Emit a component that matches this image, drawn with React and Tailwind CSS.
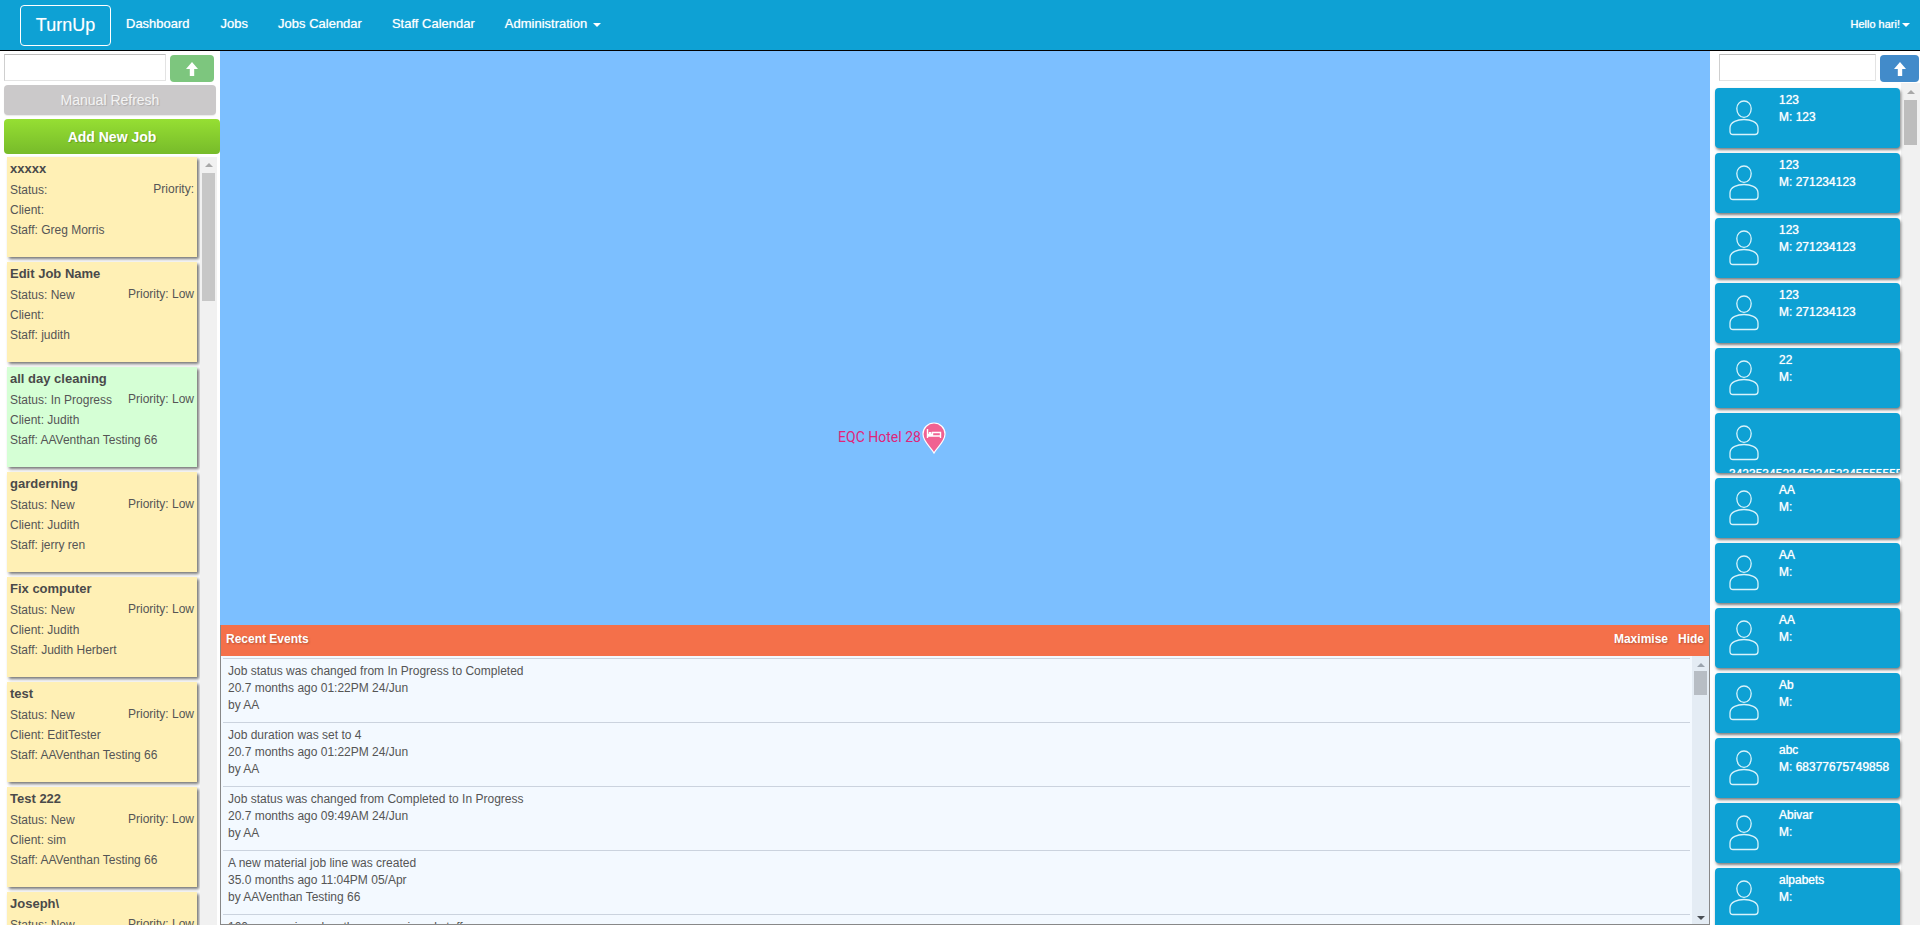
import React from "react";

const yellow = "bg-[#fff0b5]";
const green = "bg-[#d5ffd5]";
const jobs = [
  { t: "xxxxx", s: "", p: "Priority:", c: "", f: "Greg Morris", bg: yellow },
  { t: "Edit Job Name", s: "New", p: "Priority: Low", c: "", f: "judith", bg: yellow },
  { t: "all day cleaning", s: "In Progress", p: "Priority: Low", c: "Judith", f: "AAVenthan Testing 66", bg: green },
  { t: "garderning", s: "New", p: "Priority: Low", c: "Judith", f: "jerry ren", bg: yellow },
  { t: "Fix computer", s: "New", p: "Priority: Low", c: "Judith", f: "Judith Herbert", bg: yellow },
  { t: "test", s: "New", p: "Priority: Low", c: "EditTester", f: "AAVenthan Testing 66", bg: yellow },
  { t: "Test 222", s: "New", p: "Priority: Low", c: "sim", f: "AAVenthan Testing 66", bg: yellow },
  { t: "Joseph\\", s: "New", p: "Priority: Low", c: "", f: "", bg: yellow },
];

const staff = [
  ["123", "M: 123"],
  ["123", "M: 271234123"],
  ["123", "M: 271234123"],
  ["123", "M: 271234123"],
  ["22", "M:"],
  null,
  ["AA", "M:"],
  ["AA", "M:"],
  ["AA", "M:"],
  ["Ab", "M:"],
  ["abc", "M: 68377675749858"],
  ["Abivar", "M:"],
  ["alpabets", "M:"],
];

const events = [
  ["Job status was changed from In Progress to Completed", "20.7 months ago 01:22PM 24/Jun", "by AA"],
  ["Job duration was set to 4", "20.7 months ago 01:22PM 24/Jun", "by AA"],
  ["Job status was changed from Completed to In Progress", "20.7 months ago 09:49AM 24/Jun", "by AA"],
  ["A new material job line was created", "35.0 months ago 11:04PM 05/Apr", "by AAVenthan Testing 66"],
  ["100 was assigned as the new assigned staff", "", ""],
];

function Caret({ className }) {
  return <span className={`inline-block w-0 h-0 border-x-[4px] border-x-transparent border-t-[4px] border-t-white ${className}`} />;
}

function UpArrow() {
  return (
    <svg width="12" height="14" viewBox="0 0 12 14" fill="white">
      <path d="M6 0 L12 7 H8.2 V14 H3.8 V7 H0 Z" />
    </svg>
  );
}

function Person() {
  return (
    <svg width="30" height="36" viewBox="0 0 30 36" fill="none" stroke="#d8f3fb" strokeWidth="1.3" className="shrink-0">
      <path d="M15 1 C19 1 22.2 4.2 22.2 8.6 C22.2 13.4 19 17.4 15 17.4 C11 17.4 7.8 13.4 7.8 8.6 C7.8 4.2 11 1 15 1 Z" />
      <path d="M1 28 C1 21.5 9 19.5 15 19.5 C21 19.5 29 21.5 29 28 V31.5 C29 33.5 28 34.5 26 34.5 H4 C2 34.5 1 33.5 1 31.5 Z" />
    </svg>
  );
}

function Search({ inputCls, btnCls }) {
  return (
    <div className="flex items-start">
      <div className={`h-[27px] bg-white border border-[#e3e3e3] border-t-[#bdbdbd] border-l-[#cfcfcf] ${inputCls}`} />
      <div className={`h-[27px] mt-px rounded-[4px] flex items-center justify-center ${btnCls}`}>
        <UpArrow />
      </div>
    </div>
  );
}

function JobCard({ j }) {
  return (
    <div className={`h-[100px] mb-[5px] w-[190px] shrink-0 px-[3px] pt-[3px] text-[12px] leading-[20px] text-[#555] shadow-[2px_2px_3px_rgba(0,0,0,0.55)] ${j.bg}`}>
      <div className="text-[13px] font-bold leading-[17px] text-[#4a4a4a] mb-[3px]">{j.t}</div>
      <div className="flex justify-between">
        <span>Status: {j.s}</span>
        <span className="-mt-[1px]">{j.p}</span>
      </div>
      <div>Client: {j.c}</div>
      <div>Staff: {j.f}</div>
    </div>
  );
}

function StaffCard({ s }) {
  return (
    <div className="relative h-[60px] mb-[5px] w-[185px] shrink-0 rounded-[4px] bg-[#0ea1d4] flex text-white text-[12px] leading-[17px] overflow-hidden shadow-[1px_2px_3px_rgba(0,0,0,0.5)] pl-[14px] pt-[12px]">
      <Person />
      {s ? (
        <div className="ml-[20px] -mt-[8.5px] [text-shadow:0_0_1px_rgba(255,255,255,0.9)]">
          <div>{s[0]}</div>
          <div>{s[1]}</div>
        </div>
      ) : (
        <div className="absolute left-[14px] top-[53px] whitespace-nowrap leading-[17px] [text-shadow:0_0_1px_rgba(255,255,255,0.9)]">3423534523452345234555555555555</div>
      )}
    </div>
  );
}

function Arrow({ up, color }) {
  return up ? (
    <span className="w-0 h-0 border-x-[4px] border-x-transparent border-b-[4px]" style={{ borderBottomColor: color }} />
  ) : (
    <span className="w-0 h-0 border-x-[4px] border-x-transparent border-t-[4px]" style={{ borderTopColor: color }} />
  );
}

export default function App() {
  return (
    <div className="w-[1920px] h-[925px] overflow-hidden bg-white font-['Liberation_Sans',Arial,sans-serif] flex flex-col">
      <nav className="h-[51px] shrink-0 bg-[#0ea1d4] border-b border-black flex items-center text-white pl-[20px] pr-[10px]">
        <div className="w-[91px] h-[41px] border border-white rounded-[4px] flex items-center justify-center text-[18px] [text-shadow:0_0_1px_rgba(255,255,255,0.4)]">TurnUp</div>
        <div className="flex items-center text-[13px] font-normal ml-[15px] gap-[30px] -mt-[2px] [text-shadow:0_0_1px_rgba(255,255,255,0.7)]">
          <span className="mr-px">Dashboard</span>
          <span>Jobs</span>
          <span>Jobs Calendar</span>
          <span>Staff Calendar</span>
          <span className="flex items-center">Administration<Caret className="ml-[6px] mt-[1px]" /></span>
        </div>
        <div className="ml-auto flex items-center text-[11px] font-normal -mt-[2px] [text-shadow:0_0_1px_rgba(255,255,255,0.9)]">Hello hari!<Caret className="ml-[2px] mt-[1px]" /></div>
      </nav>

      <main className="flex-1 flex min-h-0">
        <aside className="w-[220px] shrink-0 flex flex-col pt-[3px] pl-[4px]">
          <Search inputCls="w-[162px]" btnCls="w-[44px] ml-[4px] bg-[#7dc67e]" />
          <div className="mt-[3px] w-[212px] h-[30px] rounded-[4px] bg-[#cbc9ca] text-[#f4f4f4] text-[14px] flex items-center justify-center shadow-[0_1px_1px_rgba(0,0,0,0.08)] [text-shadow:1px_1px_1px_rgba(0,0,0,0.15)]">Manual Refresh</div>
          <div className="mt-[4px] w-[216px] h-[35px] pt-px rounded-[4px] bg-gradient-to-b from-[#96df33] to-[#77bb2a] text-white text-[14px] font-bold flex items-center justify-center [text-shadow:1px_1px_1px_rgba(0,0,0,0.2)]">Add New Job</div>
          <div className="flex-1 min-h-0 flex pt-[3px] overflow-hidden">
            <div className="flex flex-col ml-[3px] w-[190px] h-[800px]">
              {jobs.map((j, i) => <JobCard key={i} j={j} />)}
            </div>
            <div className="w-[17px] ml-[3px] bg-[#f1f1f1] flex flex-col items-center pt-[6px]">
              <Arrow up color="#a8a8a8" />
              <div className="w-[13px] h-[128px] mt-[6px] bg-[#c7c7c7]" />
            </div>
          </div>
        </aside>

        <section className="flex-1 min-w-0 flex flex-col">
          <div className="h-[574px] shrink-0 bg-[#7cbfff] flex items-start justify-center">
            <div className="flex items-start ml-[-147px] mt-[371px]">
              <span className="ml-px text-[14px] leading-[16px] mt-[7px] text-[#e0257a] font-['Roboto',sans-serif]">EQC Hotel 28</span>
              <svg width="24" height="32" viewBox="0 0 24 32" className="ml-px">
                <path d="M12 31 C9 25 1 20 1 12 A11 11 0 0 1 23 12 C23 20 15 25 12 31 Z" fill="#f06292" stroke="white" strokeWidth="1.2" />
                <path d="M5.5 7 V16 M5.5 14 H18.5 V16 M18.5 14 V10.5 H10.5 V12.5 H5.5" stroke="white" strokeWidth="1.4" fill="none" />
                <rect x="6.8" y="10" width="2.6" height="2.4" fill="white" />
              </svg>
            </div>
          </div>
          <div className="flex-1 min-h-0 border-x border-b border-[#888] flex flex-col">
            <div className="h-[31px] shrink-0 bg-[#f4704a] flex items-center justify-between px-[5px] pb-[3px] text-white text-[12px] font-bold [text-shadow:1px_1px_2px_rgba(0,0,0,0.25)]">
              <span>Recent Events</span>
              <span className="flex gap-[10px]"><span>Maximise</span><span>Hide</span></span>
            </div>
            <div className="flex-1 min-h-0 flex bg-[#f3f9ff] overflow-hidden">
              <div className="flex-1 min-w-0 ml-[2px] mr-[2px] pt-[2px] overflow-hidden">
                {events.map((e, i) => (
                  <div key={i} className="h-[64px] border-t border-[#cbd3de] pl-[5px] pt-[4px] text-[12px] leading-[17px] text-[#555]">
                    <div>{e[0]}</div>
                    <div>{e[1]}</div>
                    <div>{e[2]}</div>
                  </div>
                ))}
              </div>
              <div className="w-[17px] shrink-0 bg-[#e4ecf4] flex flex-col items-center justify-between pt-[7px] pb-[4px]">
                <div className="flex flex-col items-center">
                  <Arrow up color="#9aa3ad" />
                  <div className="w-[13px] h-[24px] mt-[4px] bg-[#b7bdc4]" />
                </div>
                <Arrow color="#4a4f55" />
              </div>
            </div>
          </div>
        </section>

        <aside className="w-[210px] shrink-0 flex flex-col pt-[3px]">
          <div className="pl-[9px]">
            <Search inputCls="w-[157px]" btnCls="w-[39px] ml-[4px] bg-[#428bca]" />
          </div>
          <div className="flex-1 min-h-0 flex pt-[1px] pl-[5px] overflow-hidden">
            <div className="flex flex-col w-[185px] h-[850px] mt-[5px]">
              {staff.map((s, i) => <StaffCard key={i} s={s} />)}
            </div>
            <div className="w-[19px] ml-[1px] bg-[#f1f1f1] flex flex-col items-center pt-[7px]">
              <Arrow up color="#a8a8a8" />
              <div className="w-[13px] h-[45px] mt-[6px] bg-[#bdbdbd]" />
            </div>
          </div>
        </aside>
      </main>
    </div>
  );
}
